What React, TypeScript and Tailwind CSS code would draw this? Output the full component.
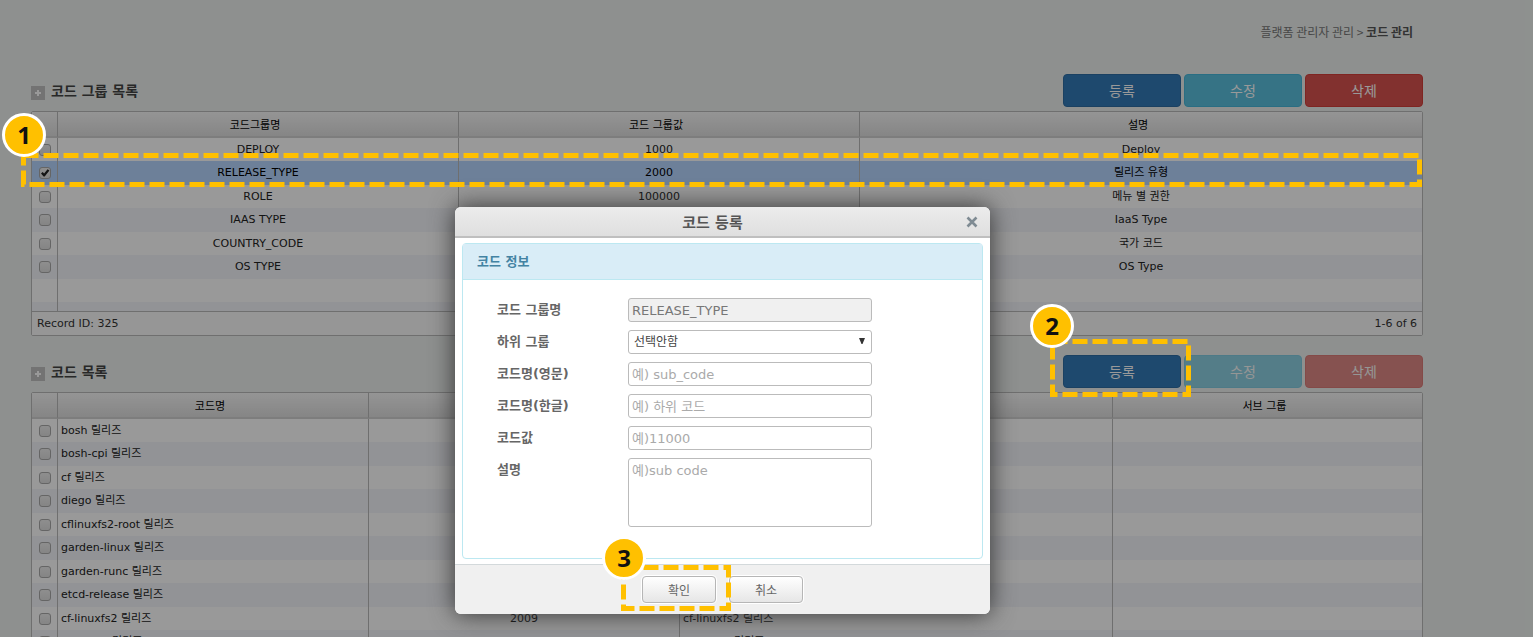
import { useState } from "react";
import type { ReactNode } from "react";

type Align = "center" | "left";

interface Column {
  label: string;
  width: string;
  align: Align;
}

interface Row {
  cells: string[];
  checked?: boolean;
}

const groupColumns: Column[] = [
  { label: "코드그룹명", width: "w-[401px]", align: "center" },
  { label: "코드 그룹값", width: "w-[401px]", align: "center" },
  { label: "설명", width: "w-auto", align: "center" },
];

const groupRows: Row[] = [
  { cells: ["DEPLOY", "1000", "Deploy"] },
  { cells: ["RELEASE_TYPE", "2000", "릴리즈 유형"], checked: true },
  { cells: ["ROLE", "100000", "메뉴 별 권한"] },
  { cells: ["IAAS TYPE", "200000", "IaaS Type"] },
  { cells: ["COUNTRY_CODE", "300000", "국가 코드"] },
  { cells: ["OS TYPE", "400000", "OS Type"] },
];

const codeColumns: Column[] = [
  { label: "코드명", width: "w-[311px]", align: "left" },
  { label: "코드값", width: "w-[311px]", align: "center" },
  { label: "설명", width: "w-[433px]", align: "left" },
  { label: "서브 그룹", width: "w-auto", align: "left" },
];

const codeNames = [
  "bosh 릴리즈",
  "bosh-cpi 릴리즈",
  "cf 릴리즈",
  "diego 릴리즈",
  "cflinuxfs2-root 릴리즈",
  "garden-linux 릴리즈",
  "garden-runc 릴리즈",
  "etcd-release 릴리즈",
  "cf-linuxfs2 릴리즈",
  "postgres 릴리즈",
];

const codeRows: Row[] = codeNames.map((name, i) => ({
  cells: [name, String(2001 + i), name, ""],
}));

function Check({ label, checked = false }: { label: string; checked?: boolean }) {
  const [on, setOn] = useState(checked);
  return (
    <label className="relative mx-auto block size-3">
      <input
        type="checkbox"
        aria-label={label}
        checked={on}
        onChange={() => setOn(!on)}
        className="peer block size-3 appearance-none rounded-[3px] border border-[#a8a8a8] bg-linear-to-b from-[#ededed] to-[#dedede]"
      />
      <svg
        viewBox="0 0 12 12"
        className="pointer-events-none absolute inset-0 hidden size-3 peer-checked:block"
        fill="#222"
      >
        <path d="M2 6.4 3.7 5 5.1 6.4 8.6 2.2 10.4 3.4 5.7 9.6 4.6 9.6z" />
      </svg>
    </label>
  );
}

function Grid({
  columns,
  rows,
  spare = false,
}: {
  columns: Column[];
  rows: Row[];
  spare?: boolean;
}) {
  const line = "border-r border-[#bababa] last:border-r-0";
  return (
    <table className="w-full table-fixed border-separate border-spacing-0 text-[11px] leading-4">
      <colgroup>
        <col className="w-[26px]" />
        {columns.map((c) => (
          <col key={c.label} className={c.width} />
        ))}
      </colgroup>
      <thead>
        <tr className="h-[26px]">
          <th className={`${line} border-b-2 border-b-[#d0d0d0] bg-linear-to-b from-[#f8f8f8] to-[#dfdfdf]`} />
          {columns.map((c) => (
            <th
              key={c.label}
              className={`${line} border-b-2 border-b-[#d0d0d0] bg-linear-to-b from-[#f8f8f8] to-[#dfdfdf] p-0 pt-1 pr-1.5 font-normal text-black`}
            >
              {c.label}
            </th>
          ))}
        </tr>
      </thead>
      <tbody>
        {rows.map((row) => (
          <tr
            key={row.cells[0]}
            className={
              row.checked
                ? "bg-[#b6d5ff] text-black odd:h-[23px] even:h-6"
                : "text-[#222] odd:h-[23px] odd:bg-white even:h-6 even:bg-[#f3f6fa]"
            }
          >
            <td className={`${line} p-0`}>
              <Check label={row.cells[0]} checked={row.checked} />
            </td>
            {row.cells.map((cell, i) => (
              <td
                key={i}
                className={`${line} px-[3px] py-0 ${columns[i].align === "center" ? "text-center" : "text-left"}`}
              >
                {cell}
              </td>
            ))}
          </tr>
        ))}
        {spare && (
          <>
            <tr className="h-[23px] bg-white">
              <td className={`${line} p-0`} />
              {columns.map((c) => (
                <td key={c.label} className={`${line} p-0`} />
              ))}
            </tr>
            <tr className="h-[9px] bg-[#f3f6fa]">
              <td className={`${line} p-0`} />
              {columns.map((c) => (
                <td key={c.label} className={`${line} p-0`} />
              ))}
            </tr>
          </>
        )}
      </tbody>
    </table>
  );
}

function SectionHeader({ title, locked = false }: { title: string; locked?: boolean }) {
  const base = "h-[33px] w-[118px] rounded-[4px] border text-sm leading-5 text-white disabled:opacity-65";
  return (
    <div className="flex items-center gap-1.5">
      <svg viewBox="0 0 14 14" className="mt-1 size-3.5">
        <rect width="14" height="14" fill="#c0c0c0" />
        <path d="M7 4v6M4 7h6" stroke="#fff" strokeWidth="2" />
      </svg>
      <h2 className="text-sm leading-5 font-bold text-[#444]">{title}</h2>
      <div className="ml-auto flex gap-[3px]">
        <button type="button" className={`${base} border-[#2e6da4] bg-[#337ab7]`}>
          등록
        </button>
        <button type="button" disabled={locked} className={`${base} border-[#46b8da] bg-[#5bc0de]`}>
          수정
        </button>
        <button type="button" disabled={locked} className={`${base} border-[#d43f3a] bg-[#d9534f]`}>
          삭제
        </button>
      </div>
    </div>
  );
}

function Badge({ children, place }: { children: ReactNode; place: string }) {
  return (
    <span
      className={`absolute flex size-11 items-center justify-center rounded-full border-3 border-white bg-[#ffc000] font-['Noto_Sans','Open_Sans',sans-serif] text-2xl leading-none font-bold text-[#111] ${place}`}
    >
      {children}
    </span>
  );
}

function DashedFrame({ place }: { place: string }) {
  return (
    <svg className={`pointer-events-none absolute ${place}`}>
      <rect
        x="2.5"
        y="2.5"
        className="h-[calc(100%-5px)] w-[calc(100%-5px)]"
        fill="none"
        stroke="#ffc000"
        strokeWidth="5"
        strokeDasharray="15 5"
      />
    </svg>
  );
}

const fieldBox =
  "w-[244px] rounded-[3px] border border-[#bbb] text-[13px] text-[#777] placeholder:text-[#aaa]";

function Field({ id, label, children }: { id: string; label: string; children: ReactNode }) {
  return (
    <div className="flex items-start">
      <label htmlFor={id} className="w-[131px] text-[13px] leading-6 font-bold text-[#666]">
        {label}
      </label>
      {children}
    </div>
  );
}

function CodeDialog() {
  const action =
    "h-[27px] w-[74px] rounded-[4px] border border-[#b6b6b6] bg-linear-to-b from-white to-[#e6e6e6] pt-0.5 text-xs leading-4 text-[#666] shadow-[0_0_0_1px_#fff]";
  return (
    <div
      role="dialog"
      aria-labelledby="dialog-title"
      className="relative w-[535px] rounded-[6px] bg-white shadow-[0_0_25px_#333]"
    >
      <header className="relative flex h-[31px] items-center justify-center rounded-t-[6px] border-b-2 border-[#bfbfbf] bg-linear-to-b from-[#ececec] to-[#dfdfdf] pt-0.5 pr-5">
        <h1 id="dialog-title" className="text-[15px] leading-5 font-bold text-[#555]">
          코드 등록
        </h1>
        <button type="button" aria-label="닫기" className="absolute top-[9px] right-3 size-3">
          <svg viewBox="0 0 12 12" className="size-3" stroke="#7f8b93" strokeWidth="2.6">
            <path d="M1.5 1.5l9 9M10.5 1.5l-9 9" />
          </svg>
        </button>
      </header>
      <div className="px-[7px] pt-[5px] pb-[5px]">
        <section className="rounded-[4px] border border-[#bce8f1]">
          <h2 className="border-b border-[#bce8f1] bg-[#d9edf7] px-3.5 pt-2 pb-[7px] text-[13px] leading-5 font-bold text-[#4383a3]">
            코드 정보
          </h2>
          <form className="flex flex-col gap-2 pt-[18px] pr-4 pb-[31px] pl-[34px]">
            <Field id="group" label="코드 그룹명">
              <input
                id="group"
                readOnly
                value="RELEASE_TYPE"
                className={`${fieldBox} h-6 bg-[#f0f0f0] px-[3px]`}
              />
            </Field>
            <Field id="sub" label="하위 그룹">
              <span className="relative">
                <select
                  id="sub"
                  className="block h-6 w-[244px] appearance-none rounded-[3px] border border-[#bbb] bg-white px-[5px] text-xs text-[#444]"
                >
                  <option>선택안함</option>
                </select>
                <svg viewBox="0 0 6 6" className="pointer-events-none absolute top-2 right-[7px] size-1.5" fill="#333">
                  <path d="M0 0h6L3.5 6h-1z" />
                </svg>
              </span>
            </Field>
            <Field id="name-en" label="코드명(영문)">
              <input id="name-en" placeholder="예) sub_code" className={`${fieldBox} h-6 px-[3px]`} />
            </Field>
            <Field id="name-ko" label="코드명(한글)">
              <input id="name-ko" placeholder="예) 하위 코드" className={`${fieldBox} h-6 px-[3px]`} />
            </Field>
            <Field id="value" label="코드값">
              <input id="value" placeholder="예)11000" className={`${fieldBox} h-6 px-[3px]`} />
            </Field>
            <Field id="desc" label="설명">
              <textarea
                id="desc"
                placeholder="예)sub code"
                className={`${fieldBox} h-[69px] resize-none px-[3px] py-0.5 leading-5`}
              />
            </Field>
          </form>
        </section>
      </div>
      <footer className="flex justify-center gap-[13px] rounded-b-[6px] border-t border-[#d3d9db] bg-[#f0f0f0] py-[11px]">
        <button type="button" className={action}>
          확인
        </button>
        <button type="button" className={action}>
          취소
        </button>
      </footer>
      <DashedFrame place="left-[166px] top-[358px] h-[46px] w-[110px]" />
      <Badge place="left-[147px] top-[329px]">3</Badge>
    </div>
  );
}

export default function App() {
  return (
    <div className="relative h-screen overflow-hidden bg-[#edf1ef] font-['DejaVu_Sans','Noto_Sans_CJK_KR',sans-serif]">
      <main className="pr-[110px] pl-[31px]">
        <nav className="pt-[22px] pr-2.5 text-right font-['Noto_Sans_CJK_KR',sans-serif] text-xs leading-5 text-[#777]">
          플랫폼 관리자 관리 &gt; <b className="text-[#555]">코드 관리</b>
        </nav>
        <section className="pt-8">
          <SectionHeader title="코드 그룹 목록" />
          <div className="mt-1 rounded-[2px] border border-[#bababa] bg-white">
            <Grid columns={groupColumns} rows={groupRows} spare />
            <div className="flex justify-between border-t border-[#bababa] bg-[#fafafa] px-[5px] pt-1 pb-[3px] text-[11px] leading-4 text-[#333]">
              <span>Record ID: 325</span>
              <span>1-6 of 6</span>
            </div>
          </div>
        </section>
        <section className="pt-[19px]">
          <SectionHeader title="코드 목록" locked />
          <div className="mt-1 rounded-[2px] border border-[#bababa] bg-white">
            <Grid columns={codeColumns} rows={codeRows} />
          </div>
        </section>
      </main>
      <div className="absolute inset-0 flex items-start justify-center bg-black/40 pt-[207px] pr-[88px]">
        <CodeDialog />
      </div>
      <DashedFrame place="left-[21px] top-[153px] h-[34px] w-[calc(100%-132px)]" />
      <Badge place="left-0.5 top-[113px]">1</Badge>
      <DashedFrame place="right-[342px] top-[339px] h-[58px] w-[141px]" />
      <Badge place="right-[459px] top-[304px]">2</Badge>
    </div>
  );
}
